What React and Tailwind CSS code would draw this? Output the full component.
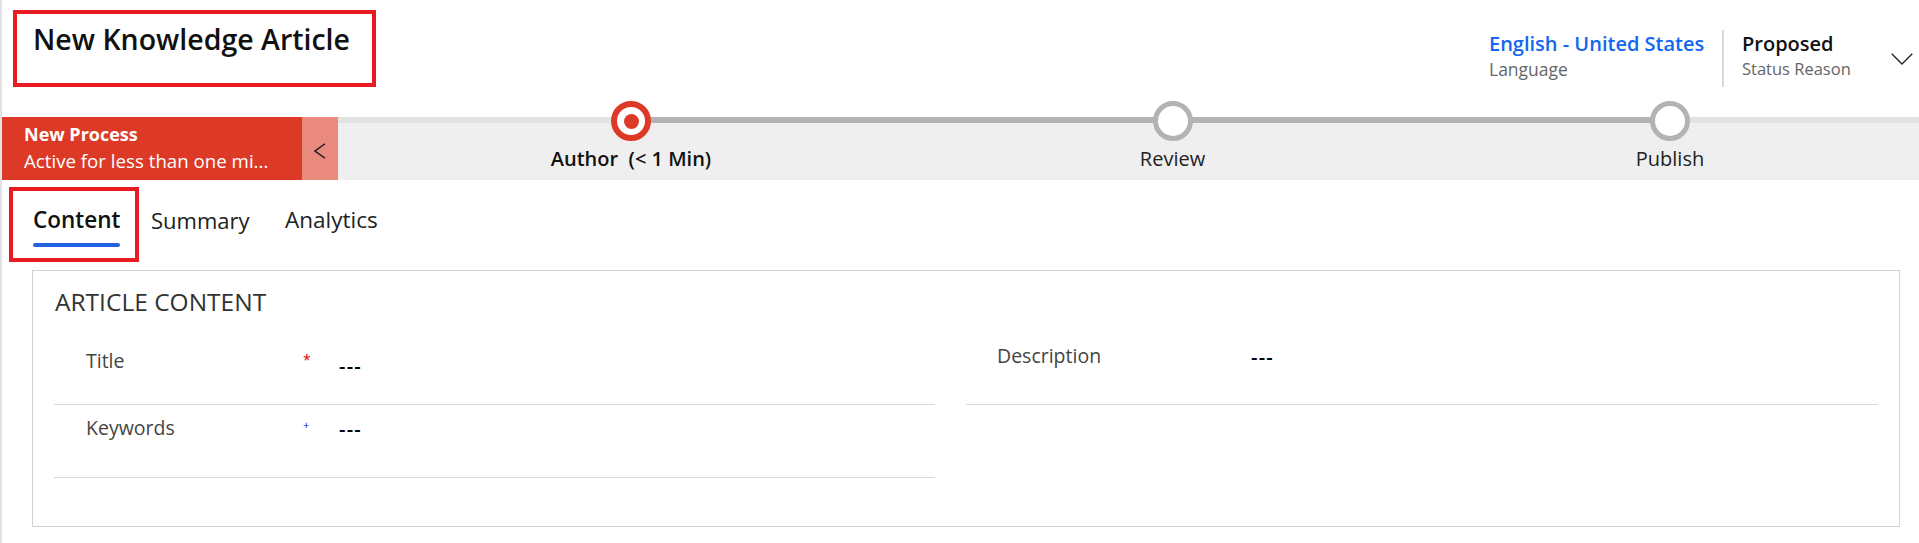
export default function App() {
  return (
    <div className="min-h-[543px] bg-white border-l-2 border-[#e3e3e3] font-['Open_Sans',sans-serif] text-black">
      {/* Header */}
      <div className="flex justify-between h-[117px]">
        <div className="ml-[11px] mt-[10px] w-[363px] h-[77px] border-4 border-[#e81b23] pl-[16px] pt-[11px]">
          <h1 className="text-[28.5px] leading-none font-semibold text-[#111]">New Knowledge Article</h1>
        </div>

        <div className="flex items-start">
          <div className="w-[233px] pt-[34px]">
            <div className="text-[20px] leading-none font-semibold text-[#1266f1]">English - United States</div>
            <div className="mt-[7px] text-[17.5px] leading-none text-[#666]">Language</div>
          </div>
          <div className="mt-[30px] w-[2px] h-[57px] bg-[#d9d9d9]" />
          <div className="ml-[18px] w-[149px] pt-[34px]">
            <div className="text-[20px] leading-none font-semibold text-[#111]">Proposed</div>
            <div className="mt-[7px] text-[16.5px] leading-none text-[#666]">Status Reason</div>
          </div>
          <div className="mt-[53px] mr-[6px]">
            <svg width="22" height="12" viewBox="0 0 22 12" fill="none">
              <polyline points="0.75,0.75 11,11 21.25,0.75" stroke="#222" strokeWidth="1.4" />
            </svg>
          </div>
        </div>
      </div>

      {/* Business process flow */}
      <div className="flex h-[63px]">
        <div className="w-[300px] bg-[#dc3a26] text-white pl-[22px] pt-[8px]">
          <div className="text-[18px] leading-none font-bold">New Process</div>
          <div className="mt-[9px] text-[18.7px] leading-none whitespace-nowrap">Active for less than one mi...</div>
        </div>
        <div className="w-[36px] bg-[#ea8a7e] flex items-center justify-center">
          <svg className="mt-[5px]" width="12" height="16" viewBox="0 0 12 16" fill="none">
            <polyline points="11,0.75 1,8 11,15.25" stroke="#1a1a1a" strokeWidth="1.4" />
          </svg>
        </div>
        <div className="flex-1 grid grid-cols-[586px_497px_498px] bg-[#efefef]">
          <div className="flex flex-col items-center">
            <div className="flex w-full h-[6px]">
              <div className="flex-1 bg-[#e2e2e2]" />
              <div className="flex-1 bg-[#b3b3b3]" />
            </div>
            <div className="-mt-[22px] w-[40px] h-[40px] rounded-full border-[6px] border-[#dc3a26] bg-white flex items-center justify-center">
              <div className="w-[15px] h-[15px] rounded-full bg-[#dc3a26]" />
            </div>
            <div className="mt-[8px] text-[20px] leading-none font-semibold text-[#111] whitespace-nowrap">Author&nbsp; (&lt; 1 Min)</div>
          </div>
          <div className="flex flex-col items-center">
            <div className="w-full h-[6px] bg-[#b3b3b3]" />
            <div className="-mt-[22px] w-[40px] h-[40px] rounded-full border-[5px] border-[#b3b3b3] bg-white" />
            <div className="mt-[8px] text-[20px] leading-none text-[#222]">Review</div>
          </div>
          <div className="flex flex-col items-center">
            <div className="flex w-full h-[6px]">
              <div className="flex-1 bg-[#b3b3b3]" />
              <div className="flex-1 bg-[#e2e2e2]" />
            </div>
            <div className="-mt-[22px] w-[40px] h-[40px] rounded-full border-[5px] border-[#b3b3b3] bg-white" />
            <div className="mt-[8px] text-[20px] leading-none text-[#222]">Publish</div>
          </div>
        </div>
      </div>

      {/* Tabs */}
      <div className="flex items-start mt-[7px]">
        <div className="ml-[7px] w-[130px] h-[75px] border-4 border-[#e81b23] pl-[20px] pt-[18px]">
          <div className="inline-flex flex-col">
            <span className="text-[22.5px] leading-none font-semibold text-[#111]">Content</span>
            <span className="mt-[11px] h-[4px] rounded-full bg-[#2262e0]" />
          </div>
        </div>
        <div className="ml-[12px] mt-[22px] w-[134px] text-[22px] leading-none text-[#222]">Summary</div>
        <div className="mt-[22px] text-[22.5px] leading-none text-[#222]">Analytics</div>
      </div>

      {/* Article content card */}
      <div className="mt-[8px] ml-[30px] mr-[19px] h-[257px] border border-[#d2d2d2] px-[21px]">
        <div className="h-[42px] pt-[19px] pl-[1px] text-[24.5px] leading-none text-[#333]">ARTICLE CONTENT</div>

        <div className="flex gap-[31px]">
          <div className="w-[881px]">
            <div className="flex items-start h-[92px] border-b border-[#d9d9d9] pt-[38px]">
              <div className="w-[249px] pl-[32px] text-[19.5px] leading-none text-[#444]">Title</div>
              <div className="w-[36px] pt-[2px] text-[14px] leading-none text-[#e00000]">*</div>
              <div className="pt-[5px] text-[20px] leading-none font-semibold tracking-[0.06em]">---</div>
            </div>
            <div className="flex items-start h-[73px] border-b border-[#d9d9d9] pt-[13px]">
              <div className="w-[249px] pl-[32px] text-[19.5px] leading-none text-[#444]">Keywords</div>
              <div className="w-[36px] pt-[1px] text-[11px] leading-none text-[#0000ee]">+</div>
              <div className="pt-[1px] text-[20px] leading-none font-semibold tracking-[0.06em]">---</div>
            </div>
          </div>

          <div className="flex-1">
            <div className="flex items-start h-[92px] border-b border-[#d9d9d9] pt-[33px]">
              <div className="w-[285px] pl-[31px] text-[19.5px] leading-none text-[#444]">Description</div>
              <div className="pt-[1px] text-[20px] leading-none font-semibold tracking-[0.06em]">---</div>
            </div>
          </div>
        </div>
      </div>
    </div>
  );
}
